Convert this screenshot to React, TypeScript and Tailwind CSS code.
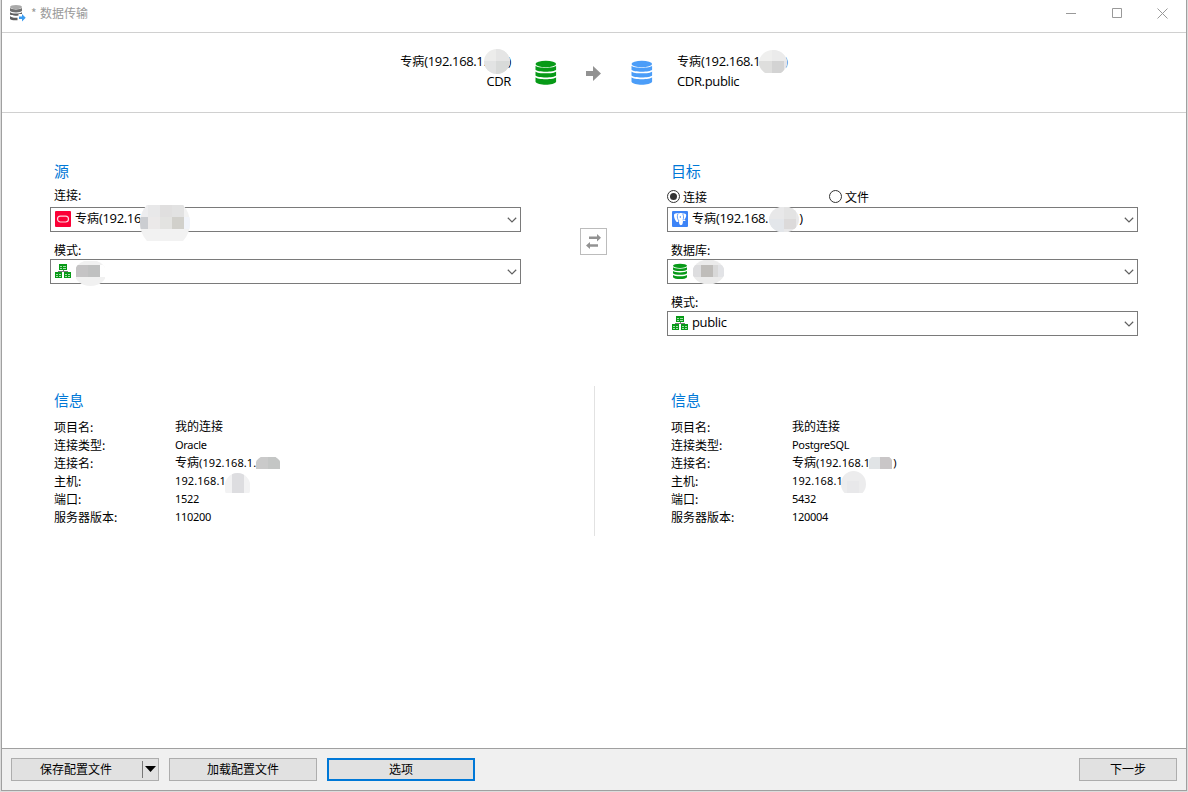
import React from 'react';

type Cell = [number, number, number, number, string];

const latin = "font-['Open_Sans','Noto_Sans_CJK_SC',sans-serif]";

// pixelated patch hiding part of a value
const Mosaic = ({ id, w, h, rx, ry, cy, base, cells, className }: {
  id: string; w: number; h: number; rx: number; ry: number; cy: number; base: string; cells: Cell[]; className: string;
}) => (
  <svg width={w} height={h} className={`absolute ${className}`}>
    <clipPath id={id}>
      <ellipse cx={w / 2} cy={cy} rx={rx} ry={ry} />
    </clipPath>
    <g clipPath={`url(#${id})`}>
      <rect width={w} height={h} fill={base} />
      {cells.map(([x, y, cw, ch, fill], i) => (
        <rect key={i} x={x} y={y} width={cw} height={ch} fill={fill} />
      ))}
    </g>
  </svg>
);

const BigDatabase = ({ color }: { color: string }) => (
  <svg width="22" height="26" viewBox="0 0 22 26" fill={color}>
    <ellipse cx="10.8" cy="4" rx="10.3" ry="3.2" />
    <path d="M.5 5.7c1.8 2.6 18.8 2.6 20.6 0v4c-1.8 2.6-18.8 2.6-20.6 0z" />
    <path d="M.5 11.4c1.8 2.6 18.8 2.6 20.6 0v4.2c-1.8 2.6-18.8 2.6-20.6 0z" />
    <path d="M.5 17.3c1.8 2.6 18.8 2.6 20.6 0v4.5c-1.8 3.9-18.8 3.9-20.6 0z" />
  </svg>
);

const TransferIcon = () => (
  <svg width="17" height="18" viewBox="0 0 17 18">
    <ellipse cx="7" cy="3" rx="6" ry="2.1" fill="#a9a9a9" />
    <path d="M1 3.800c1 2.200 11 2.200 12 0v3c-1 2.200-11 2.200-12 0z" fill="#6f6f6f" />
    <path d="M1 8c1 2 11 2 12 0v2H9.500v1.500C6 11.900 2 11.600 1 10.500z" fill="#5f5f5f" />
    <path d="M1 12c1 1.500 4 1.900 7.500 1.700v2.600C5 16.500 1.500 16.200 1 15z" fill="#5f5f5f" />
    <path d="M10 12.500h3V10l3.700 3.700-3.700 3.800V15h-3z" fill="#3b9cf0" />
  </svg>
);

const OracleIcon = () => (
  <svg width="16" height="16" viewBox="0 0 16 16">
    <rect width="16" height="16" rx="1" fill="#fb0036" />
    <rect x="2.500" y="5.200" width="11" height="5.800" rx="2.900" fill="none" stroke="#ffd6df" strokeWidth="1.200" />
  </svg>
);

const PostgresIcon = () => (
  <svg width="16" height="16" viewBox="0 0 16 16">
    <rect width="16" height="16" rx="1" fill="#3d84f7" />
    <path d="M2.200 3.200C3.400 2 6 2.200 7 2.600c1.500-.8 3-.6 4 0 1.500-.6 3.400 0 3.200 2-.1 1.700-1.100 3.500-2 4.400l1.600.2c-.5.8-1.700 1-2.800.8-.2 2.200-.4 3.800-1.700 4.100C7.400 14.400 7 12.500 7 10c-.8.5-1.300 1.200-2 1C3.400 10.500 1.300 5 2.200 3.200z" fill="#fff" />
    <path d="M5.800 3c-.7 2-.6 4 .2 5.500l1 1.500M10.800 3c.9 1.500 1 3.900.2 6.300M8.300 5v2" fill="none" stroke="#3d84f7" strokeWidth=".8" />
  </svg>
);

const DatabaseIcon = () => (
  <svg width="16" height="17" viewBox="0 0 16 17" fill="#079a17">
    <ellipse cx="8" cy="2.800" rx="7" ry="2.100" />
    <path d="M1 4.200c1.300 1.900 12.700 1.900 14 0v2.200c-1.300 2-12.700 2-14 0z" />
    <path d="M1 8c1.300 1.900 12.700 1.900 14 0v2.300c-1.300 2-12.700 2-14 0z" />
    <path d="M1 11.900c1.300 1.900 12.700 1.900 14 0v2.300c-1.300 2.500-12.700 2.500-14 0z" />
  </svg>
);

const SchemaIcon = () => (
  <svg width="16" height="15" viewBox="0 0 16 15" shapeRendering="crispEdges">
    <path d="M8 6v2M3.500 9V7.500h9V9" fill="none" stroke="#777" />
    <path d="M4 0h8v6H4zM0 8h7v6H0zM9 8h7v6H9z" fill="#079a17" />
    <path d="M5 2h2v1H5zM8 2h3v1H8zM5 4h2v1H5zM8 4h3v1H8zM1 10h2v1H1zM4 10h2v1H4zM1 12h2v1H1zM4 12h2v1H4zM10 10h2v1h-2zM13 10h2v1h-2zM10 12h2v1h-2zM13 12h2v1h-2z" fill="#a5dfaa" />
  </svg>
);

const Chevron = () => (
  <svg width="10" height="6" viewBox="0 0 10 6" fill="none" stroke="#606060" strokeWidth="1.2">
    <path d="M.8.8 5 4.900 9.200.8" />
  </svg>
);

const Combo = ({ icon, children }: { icon: React.ReactNode; children?: React.ReactNode }) => (
  <div className="relative flex h-[25px] w-full items-center border border-[#7a7a7a] bg-white pl-1 pr-[3px]">
    <span className="flex w-4 shrink-0 pb-px">{icon}</span>
    <span className={`ml-1 flex-1 whitespace-nowrap pb-0.5 text-[13px] leading-[21px] tracking-[-0.35px] ${latin}`}>{children}</span>
    <Chevron />
  </div>
);

const Host = ({ address }: { address: string }) => (
  <>
    <span className="text-[12px] tracking-normal">专病</span>
    {address}
  </>
);

const Heading = ({ children }: { children: React.ReactNode }) => (
  <h2 className="h-[26px] pl-1 text-[15px] leading-[22px] tracking-[-0.3px] text-[#0078d7]">{children}</h2>
);

const FieldLabel = ({ children }: { children: React.ReactNode }) => (
  <div className="h-[27px] pl-1 pt-[9px] leading-[18px]">{children}</div>
);

const Radio = ({ checked, label }: { checked?: boolean; label: string }) => (
  <label className="flex w-[162px] items-center gap-[3px]">
    <span className="flex size-[13px] items-center justify-center rounded-full border border-[#333]">
      {checked && <span className="size-[7px] rounded-full bg-[#333]" />}
    </span>
    {label}
  </label>
);

const labels = ['项目名:', '连接类型:', '连接名:', '主机:', '端口:', '服务器版本:'];

const Info = ({ values, children }: { values: React.ReactNode[]; children: React.ReactNode }) => (
  <div className="relative h-[150px] pt-[3px]">
    <Heading>信息</Heading>
    <dl className="mt-[3px] pl-1">
      {labels.map((label, i) => (
        <div key={label} className="flex h-[18px] leading-[18px]">
          <dt className="w-[121px]">{label}</dt>
          <dd className="whitespace-nowrap font-['Noto_Sans','Noto_Sans_CJK_SC',sans-serif] text-[11px] tracking-[-0.3px]">{values[i]}</dd>
        </div>
      ))}
    </dl>
    {children}
  </div>
);

const cjk = 'text-[12px] tracking-normal';
const ip = 'tracking-[0.1px]';

const leftValues = [
  <span className={cjk}>我的连接</span>,
  'Oracle',
  <span className={ip}><Host address="(192.168.1." /></span>,
  <span className={ip}>192.168.1</span>,
  '1522',
  '110200',
];

const rightValues = [
  <span className={cjk}>我的连接</span>,
  'PostgreSQL',
  <span className={ip}><Host address="(192.168.1" /><span className="ml-[23px]">)</span></span>,
  <span className={ip}>192.168.1</span>,
  '5432',
  '120004',
];

const button = 'flex h-[23px] items-center justify-center border border-[#adadad] bg-[#e1e1e1] pb-px leading-none';

const App = () => {
  return (
    <div className="h-[792px] w-[1188px] overflow-hidden bg-[#dcdcdc] px-px pb-px font-['Noto_Sans_CJK_SC',sans-serif] text-[12px] text-black">
      <div className="flex h-full flex-col border-x border-b border-[#a0a0a0] bg-white">
        <header className="flex h-[33px] shrink-0 items-center border-b border-[#d0d0d0] pb-[6px] pl-[7px] text-[#999]">
          <TransferIcon />
          <span className="ml-[5px] w-[9px]">*</span>
          <span>数据传输</span>
          <div className="ml-auto mr-[18px] flex items-center gap-[35px]">
            <svg width="11" height="11" fill="none" stroke="#999"><path d="M0 5.500h10" /></svg>
            <svg width="10" height="10" fill="none" stroke="#999"><path d="M.5.5h9v9h-9z" /></svg>
            <svg width="11" height="11" fill="none" stroke="#999"><path d="m.5.5 10 10m0-10-10 10" /></svg>
          </div>
        </header>

        <section className={`flex h-20 shrink-0 border-b border-[#d0d0d0] text-[13px] leading-5 tracking-[-0.35px] ${latin}`}>
          <div className="relative w-[509px] pt-[18px] text-right">
            <p><Host address="(192.168.1." /><span className="ml-[21px]">)</span></p>
            <p className="leading-[18px]">CDR</p>
            <Mosaic id="m1" className="left-[482px] top-4" w={26} h={25} rx={13} ry={12.5} cy={12.5} base="#ececeb"
              cells={[[12, 0, 14, 12, '#e5e5e5'], [0, 12, 12, 13, '#e2e3e3'], [12, 12, 14, 13, '#d8dad9']]} />
          </div>
          <div className="flex w-[166px] items-start pl-6 pt-[27px]">
            <BigDatabase color="#079a17" />
            <svg width="15" height="15" viewBox="0 0 15 15" className="ml-[29px] mt-[6px]" fill="#929292">
              <path d="M0 5h7V0l8 7.500L7 15v-5H0z" />
            </svg>
            <span className="ml-[30px]"><BigDatabase color="#4b9df8" /></span>
          </div>
          <div className="relative pt-[18px]">
            <p><Host address="(192.168.1" /><span className="ml-[24px] text-[#5c6cab]">)</span></p>
            <p className="leading-[18px]">CDR.public</p>
            <Mosaic id="m2" className="left-[82px] top-[17px]" w={28} h={23} rx={14} ry={12.5} cy={12.5} base="#efefee"
              cells={[[13, 0, 15, 11, '#ebebeb'], [0, 11, 13, 12, '#dededd'], [13, 11, 12, 12, '#d3d3d3'], [25, 11, 3, 12, '#e5e5e8']]} />
          </div>
        </section>

        <main className="flex-1 pl-12 pt-[47px]">
          <div className="grid h-[226px] grid-cols-[471px_146px_471px]">
            <div>
              <Heading>源</Heading>
              <div className="h-[21px] pl-1 leading-[18px]">连接:</div>
              <Combo icon={<OracleIcon />}>
                <Host address="(192.16" />
                <Mosaic id="m3" className="left-[89px] top-[-3px]" w={50} h={36} rx={25} ry={26} cy={18} base="#f2f2f2"
                  cells={[[0, 0, 8, 12, '#ededef'], [8, 0, 12, 12, '#e8e8e9'], [20, 0, 12, 12, '#e0dfdf'], [32, 0, 12, 12, '#e2e2e2'], [0, 12, 8, 12, '#cbcdd1'], [8, 12, 12, 12, '#ebe9e9'], [20, 12, 12, 12, '#e3e3e1'], [32, 12, 12, 12, '#d1d0cb'], [44, 12, 6, 12, '#f1f4fa']]} />
              </Combo>
              <FieldLabel>模式:</FieldLabel>
              <Combo icon={<SchemaIcon />}>
                <Mosaic id="m4" className="left-[25px] top-px" w={29} h={25} rx={16} ry={13} cy={12} base="#f1f1f1"
                  cells={[[0, 4, 12, 12, '#c5c4c5'], [12, 4, 12, 12, '#c0c1c1'], [24, 4, 6, 12, '#fff']]} />
              </Combo>
            </div>
            <div className="pl-[59px] pt-[68px]">
              <button className="flex size-[27px] items-center justify-center border border-[#bcbcbc]">
                <svg width="15" height="15" viewBox="0 0 15 15" fill="#929292">
                  <path d="M3 2.500h8V0l4 3.700-4 3.800V5H3zM12 10.300H4V8L0 11.500 4 15v-2.200h8z" />
                </svg>
              </button>
            </div>
            <div>
              <Heading>目标</Heading>
              <div className="flex h-[21px] items-center">
                <Radio checked label="连接" />
                <Radio label="文件" />
              </div>
              <Combo icon={<PostgresIcon />}>
                <Host address="(192.168." />
                <span className="ml-[31px]">)</span>
                <Mosaic id="m5" className="left-[101px] top-[-1px]" w={30} h={25} rx={15} ry={13} cy={12.5} base="#e8e8e9"
                  cells={[[0, 12, 15, 13, '#e3e6ea'], [15, 0, 12, 12, '#e3e3e3'], [15, 12, 12, 10, '#dcdada']]} />
              </Combo>
              <FieldLabel>数据库:</FieldLabel>
              <Combo icon={<DatabaseIcon />}>
                <Mosaic id="m6" className="left-[25px] top-0" w={31} h={24} rx={16} ry={12.5} cy={12} base="#ebebeb"
                  cells={[[0, 5, 8, 12, '#dddddf'], [8, 5, 12, 12, '#bfbdba'], [20, 5, 5, 12, '#d8d8d8'], [25, 5, 6, 12, '#e2e3e6']]} />
              </Combo>
              <FieldLabel>模式:</FieldLabel>
              <Combo icon={<SchemaIcon />}>public</Combo>
            </div>
          </div>

          <div className="grid grid-cols-[471px_146px_471px]">
            <Info values={leftValues}>
              <Mosaic id="m7" className="left-[206px] top-[71px]" w={24} h={12} rx={14} ry={14} cy={12} base="#cacaca" cells={[[12, 0, 12, 12, '#c4c6c5']]} />
              <Mosaic id="m8" className="left-[175px] top-[87px]" w={25} h={20} rx={13} ry={14} cy={14} base="#f2f2f3" cells={[[7, 0, 12, 20, '#dddde0']]} />
            </Info>
            <div className="ml-[73px] w-px bg-[#e2e2e2]" />
            <Info values={rightValues}>
              <Mosaic id="m9" className="left-[202px] top-[71px]" w={23} h={12} rx={13} ry={12} cy={9} base="#e1e4e6" cells={[[11, 0, 12, 12, '#c9c6c7']]} />
              <Mosaic id="m10" className="left-[174px] top-[85px]" w={25} h={22} rx={12.5} ry={13} cy={13} base="#ececed" cells={[[6, 10, 12, 12, '#e8e8ea']]} />
            </Info>
          </div>
        </main>

        <footer className="flex h-[42px] shrink-0 border-t border-[#a0a0a0] bg-[#f0f0f0] pl-[9px] pr-[9px] pt-[9px]">
          <div className={`${button} w-[148px]`}>
            <span className="flex-1 pr-0.5 text-center">保存配置文件</span>
            <span className="flex h-[17px] w-4 items-center border-l border-[#777] pl-[2px]">
              <svg width="11" height="6"><path d="M0 0h11L5.500 6z" /></svg>
            </span>
          </div>
          <button className={`${button} ml-[10px] w-[148px]`}>加载配置文件</button>
          <button className="ml-[10px] flex h-[23px] w-[148px] items-center justify-center border-2 border-[#0078d7] bg-[#e1e1e1] pb-px leading-none">选项</button>
          <button className={`${button} ml-auto w-[98px]`}>下一步</button>
        </footer>
      </div>
    </div>
  );
};

export default App;
